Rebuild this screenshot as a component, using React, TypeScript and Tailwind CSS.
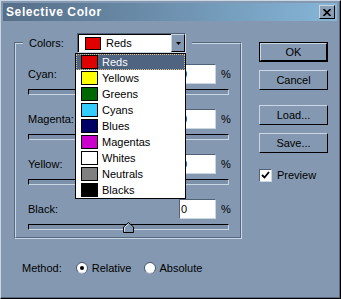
import React from "react";

const BG = "bg-[#8499b1]";

const swatches = [
  { name: "Reds", color: "#e00000" },
  { name: "Yellows", color: "#ffff00" },
  { name: "Greens", color: "#006800" },
  { name: "Cyans", color: "#33ccff" },
  { name: "Blues", color: "#000066" },
  { name: "Magentas", color: "#cc00cc" },
  { name: "Whites", color: "#ffffff" },
  { name: "Neutrals", color: "#808080" },
  { name: "Blacks", color: "#000000" },
];

function Button({ label, isDefault }: { label: string; isDefault?: boolean }) {
  return (
    <div className={`w-[69px] h-[20px] ${isDefault ? "border border-black" : ""}`}>
      <div className="w-full h-full flex items-center justify-center border-t border-l border-[#c9d6e3] border-r border-b border-r-black border-b-black text-black">
        {label}
      </div>
    </div>
  );
}

function Track({ thumb }: { thumb?: boolean }) {
  return (
    <div className="relative ml-[12px] w-[201px] h-[6px] border-t border-l border-black border-r border-b border-r-[#c9d6e3] border-b-[#c9d6e3] bg-[#7c91a9]">
      {thumb && (
        <svg className="absolute left-[94px] top-[-3px]" width="11" height="11" viewBox="0 0 11 11">
          <path d="M0.5 10.5 V5 L5.5 0.5 L10.5 5 V10.5 Z" fill="#8499b1" stroke="#000" />
          <path d="M1.5 9.5 V5.4 L5.5 1.8" fill="none" stroke="#dde6ee" />
        </svg>
      )}
    </div>
  );
}

function Row({ label, thumb, first }: { label: string; thumb?: boolean; first?: boolean }) {
  return (
    <div className={first ? "mt-[20px]" : "mt-[14px]"}>
      <div className="flex items-center h-[20px]">
        <div className="pl-[12px] w-[163px]">{label}</div>
        <div className="w-[37px] h-[20px] bg-white border-t border-l border-[#4f6278] border-b border-r border-b-[#c9d6e3] border-r-[#c9d6e3] flex items-center pl-[1px] text-black">
          0
        </div>
        <div className="ml-[5px]">%</div>
      </div>
      <div className="mt-[5px]">
        <Track thumb={thumb} />
      </div>
    </div>
  );
}

function Radio({ checked }: { checked?: boolean }) {
  return (
    <svg width="12" height="12" viewBox="0 0 12 12">
      <circle cx="6" cy="6" r="5.5" fill="#fff" stroke="#44566a" />
      <path d="M2 9.5 A5 5 0 0 0 10 9" fill="none" stroke="#dde6ee" />
      {checked && <circle cx="6" cy="6" r="2" fill="#000" />}
    </svg>
  );
}

export default function App() {
  return (
    <div
      className={`w-[341px] h-[299px] ${BG} border-t border-l border-[#c9d6e3] border-r border-b border-r-black border-b-black text-[11px] text-black`}
      style={{ fontFamily: "'Liberation Sans', Arial, sans-serif" }}
    >
      <div className="h-full border-r border-b border-[#55687e] flex flex-col">
        <div className="mt-[2px] ml-[2px] w-[334px] h-[18px] bg-gradient-to-r from-[#566e88] to-[#86b6d8] flex items-center justify-between">
          <span className="pl-[3px] font-bold text-white text-[12px] tracking-[0.6px]">Selective Color</span>
          <div className="mr-[2px] w-[16px] h-[14px] bg-[#8a9fb5] border-t border-l border-[#c9d6e3] border-r border-b border-r-black border-b-black flex items-center justify-center">
            <svg width="8" height="7" viewBox="0 0 8 7">
              <path d="M0.5 0 L7.5 7 M7.5 0 L0.5 7" stroke="#000" strokeWidth="1.6" />
            </svg>
          </div>
        </div>

        <div className="flex mt-[21px]">
          <div className="ml-[13px] w-[228px]">
            <div className="relative h-[197px] border-t border-l border-[#55687e] border-r border-b border-r-[#c9d6e3] border-b-[#c9d6e3]">
              <div className="h-full border-t border-l border-[#c9d6e3] border-r border-b border-r-[#55687e] border-b-[#55687e]">
                <Row label="Cyan:" first />
                <Row label="Magenta:" />
                <Row label="Yellow:" />
                <Row label="Black:" thumb />
              </div>

              <div className={`absolute left-[8px] top-[-10px] ${BG} px-[6px] flex items-center h-[20px]`}>
                <span className="w-[48px]">Colors:</span>
                <div className="w-[109px] h-[20px] bg-white border-t border-l border-[#4f6278] border-r border-b border-r-[#c9d6e3] border-b-[#c9d6e3] flex items-center">
                  <div className="flex-1 h-full border-t border-l border-black flex items-center pl-[6px]">
                    <span className="w-[16px] h-[13px] border border-black bg-[#e00000]" />
                    <span className="ml-[5px]">Reds</span>
                  </div>
                  <div className="w-[14px] h-full border-t border-l border-[#c9d6e3] border-r border-b border-r-black border-b-black bg-[#8499b1] flex items-center justify-center">
                    <svg width="5" height="3" viewBox="0 0 5 3">
                      <path d="M0 0 H5 L2.5 3 Z" fill="#000" />
                    </svg>
                  </div>
                </div>
              </div>

              <div className="absolute left-[60px] top-[10px] w-[111px] bg-white border border-black">
                {swatches.map((s, i) => (
                  <div
                    key={s.name}
                    className={`h-[16px] flex items-center pl-[5px] ${
                      i === 0 ? "bg-[#4e6480] text-white outline outline-1 outline-dotted outline-[#d8c088] -outline-offset-1" : ""
                    }`}
                  >
                    <span className="w-[17px] h-[14px] border border-black" style={{ background: s.color }} />
                    <span className="ml-[4px]">{s.name}</span>
                  </div>
                ))}
              </div>
            </div>

            <div className="flex items-center mt-[22px] ml-[8px] h-[14px]">
              <span>Method:</span>
              <span className="ml-[14px] flex items-center">
                <Radio checked />
                <span className="ml-[4px]">Relative</span>
              </span>
              <span className="ml-[12px] flex items-center">
                <Radio />
                <span className="ml-[4px]">Absolute</span>
              </span>
            </div>
          </div>

          <div className="ml-[17px] flex flex-col">
            <Button label="OK" isDefault />
            <div className="mt-[8px]">
              <Button label="Cancel" />
            </div>
            <div className="mt-[15px]">
              <Button label="Load..." />
            </div>
            <div className="mt-[8px]">
              <Button label="Save..." />
            </div>
            <div className="mt-[14px] flex items-center">
              <div className="w-[13px] h-[13px] bg-white border-t border-l border-[#4f6278] border-r border-b border-r-[#c9d6e3] border-b-[#c9d6e3] flex items-center justify-center">
                <svg width="9" height="8" viewBox="0 0 9 8">
                  <path d="M1 4 L3.5 6.5 L8 1" fill="none" stroke="#000" strokeWidth="1.8" />
                </svg>
              </div>
              <span className="ml-[5px]">Preview</span>
            </div>
          </div>
        </div>
      </div>
    </div>
  );
}
